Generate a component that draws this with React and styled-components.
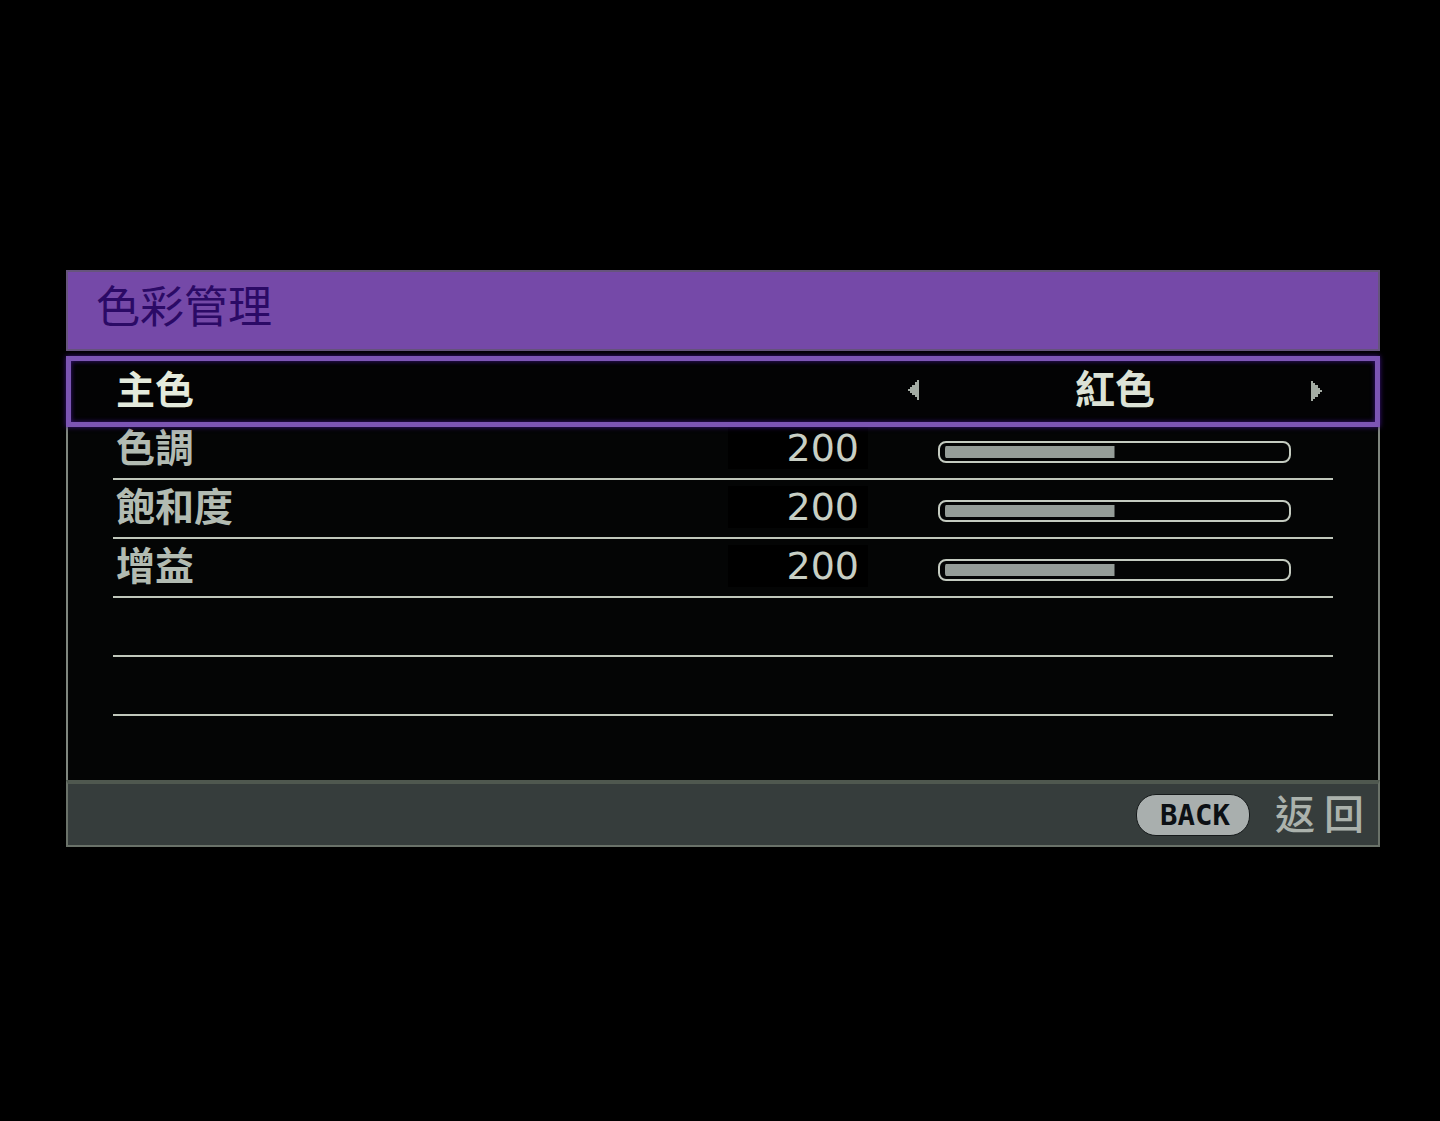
import { useState } from "react";
import styled, { createGlobalStyle } from "styled-components";

const GlobalStyle = createGlobalStyle`
  * {
    box-sizing: border-box;
  }
  body {
    margin: 0;
    background-color: #000000;
    font-family: "DejaVu Sans", "Noto Sans CJK TC", sans-serif;
  }
`;

const Page = styled.main`
  min-height: 100vh;
  display: flex;
  flex-direction: column;
  justify-content: center;
  padding: 0 60px 4px 66px;
`;

const Header = styled.header`
  height: 81px;
  display: flex;
  align-items: center;
  padding: 0 28px 14px;
  border: 2px solid #66547c;
  background-color: #7549a8;
`;

const Title = styled.h1`
  margin: 0;
  color: #2b0a66;
  font-family: "Noto Sans CJK TC", sans-serif;
  font-size: 44px;
  font-weight: 400;
  line-height: 48px;
`;

const Selected = styled.section`
  height: 71px;
  margin-top: 5px;
  display: flex;
  align-items: center;
  justify-content: space-between;
  padding: 0 53px 4px 45px;
  border: 5px solid #7c55b4;
  background-color: #030304;
  box-shadow: 0 0 5px #3c1480, inset 0 0 5px #3c1480;
  position: relative;
`;

const Label = styled.label`
  padding-bottom: 6px;
  color: ${(props) => (props.$active ? "#e4eadc" : "#b2bbb2")};
  font-family: "Noto Sans CJK TC", sans-serif;
  font-size: 39px;
  font-weight: 700;
  line-height: 42px;
`;

const Stepper = styled.div`
  width: 414px;
  display: flex;
  align-items: center;
  justify-content: space-between;
`;

const StepButton = styled.button`
  display: flex;
  padding: 0;
  border: none;
  background: none;
  color: #a4aca4;
  cursor: pointer;
`;

const StepValue = styled.output`
  padding-bottom: 6px;
  color: #dce2d6;
  font-family: "Noto Sans CJK TC", sans-serif;
  font-size: 40px;
  font-weight: 700;
  line-height: 42px;
`;

const List = styled.section`
  display: flex;
  flex-direction: column;
  gap: 6px;
  padding: 0 45px 64px;
  border: solid #7f867e;
  border-width: 0 2px;
  background-color: #040505;
`;

const Row = styled.div`
  height: 53px;
  display: grid;
  grid-template-columns: 1fr 140px 353px;
  grid-template-rows: 42px;
  column-gap: 70px;
  align-items: center;
  padding: 0 42px 9px 3px;
  border-bottom: 2px solid #c0c7bb;
`;

const Value = styled.output`
  padding-right: 9px;
  background-color: #000000;
  color: #c8cfc4;
  font-size: 38px;
  line-height: 42px;
  text-align: right;
`;

const Slider = styled.input`
  appearance: none;
  width: 100%;
  height: 22px;
  margin: 8px 0 0;
  padding: 3px 5px;
  border: 2px solid #c4cbc0;
  border-radius: 8px;
  background: linear-gradient(#959d98, #959d98) no-repeat content-box
    content-box;
  cursor: pointer;

  &::-webkit-slider-thumb {
    appearance: none;
    width: 1px;
    height: 12px;
  }
`;

const Footer = styled.footer`
  height: 67px;
  display: flex;
  align-items: center;
  justify-content: flex-end;
  gap: 25px;
  padding: 0 14px;
  border: 2px solid #6a7269;
  border-top: 4px solid #4f584f;
  background-color: #363d3c;
`;

const BackButton = styled.button`
  width: 114px;
  height: 42px;
  padding: 0 0 0 4px;
  border: 1px solid #161a1b;
  border-radius: 20px;
  background-color: #a9afae;
  color: #0c1014;
  font-family: "DejaVu Sans Mono", monospace;
  font-size: 29px;
  font-weight: 700;
  line-height: 40px;
  cursor: pointer;
`;

const Hint = styled.span`
  padding-bottom: 6px;
  color: #abb2ac;
  font-family: "Noto Sans CJK TC", sans-serif;
  font-size: 40px;
  font-weight: 500;
  line-height: 42px;
`;

const colors = ["紅色", "綠色", "藍色", "青色", "洋紅色", "黃色"];
const MAX = 400;

const Arrow = ({ points }) => (
  <svg width="12" height="22" viewBox="0 0 12 22" aria-hidden="true">
    <polygon points={points} fill="currentColor" />
  </svg>
);

const Adjustment = ({ id, name }) => {
  const [value, setValue] = useState(200);
  return (
    <Row>
      <Label htmlFor={id}>{name}</Label>
      <Value htmlFor={id}>{value}</Value>
      <Slider
        id={id}
        type="range"
        min="0"
        max={MAX}
        value={value}
        onChange={(e) => setValue(Number(e.target.value))}
        style={{ backgroundSize: `${(value / MAX) * 100}% 100%` }}
      />
    </Row>
  );
};

const App = () => {
  const [index, setIndex] = useState(0);
  const step = (n) => setIndex((index + n + colors.length) % colors.length);

  return (
    <Page>
      <GlobalStyle />
      <Header>
        <Title>色彩管理</Title>
      </Header>
      <Selected>
        <Label $active htmlFor="primary">
          主色
        </Label>
        <Stepper>
          <StepButton aria-label="上一個" onClick={() => step(-1)}>
            <Arrow points="11,1 11,21 9,21 9,18 7,18 7,16 4,16 4,14 2,14 2,12 0,12 0,10 2,10 2,8 4,8 4,6 7,6 7,3 9,3 9,1" />
          </StepButton>
          <StepValue id="primary">{colors[index]}</StepValue>
          <StepButton aria-label="下一個" onClick={() => step(1)}>
            <Arrow points="1,2 1,22 3,22 3,20 5,20 5,18 8,18 8,15 10,15 10,13 12,13 12,11 10,11 10,9 8,9 8,6 5,6 5,4 3,4 3,2" />
          </StepButton>
        </Stepper>
      </Selected>
      <List>
        <Adjustment id="hue" name="色調" />
        <Adjustment id="saturation" name="飽和度" />
        <Adjustment id="gain" name="增益" />
        <Row />
        <Row />
      </List>
      <Footer>
        <BackButton>BACK</BackButton>
        <Hint>返 回</Hint>
      </Footer>
    </Page>
  );
};

export default App;
